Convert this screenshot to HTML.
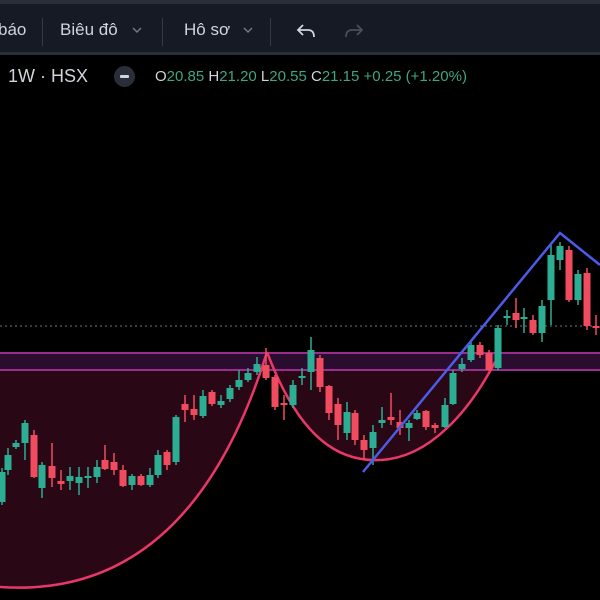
<!DOCTYPE html>
<html><head><meta charset="utf-8"><style>
body{margin:0;width:600px;height:600px;background:#000;overflow:hidden;font-family:"Liberation Sans",sans-serif;position:relative}
.tb{position:absolute;left:0;top:0;width:600px;height:55px;background:#161a24;border-top:4px solid #2a2e39;border-bottom:3px solid #2a2e39;box-sizing:border-box}
.t{position:absolute;top:16px;font-size:17px;color:#d1d4dc}
.ch{position:absolute;top:22px}
.sep{position:absolute;top:14px;width:1px;height:28px;background:#363a45}
.lg{position:absolute;top:66px;font-size:18px;color:#d1d4dc}
.o{position:absolute;top:68px;left:155px;font-size:15px;color:#d1d4dc;white-space:nowrap}
.o span{color:#3fa584}
</style></head><body>
<div class="tb">
<div class="t" style="left:-2px">báo</div>
<div class="sep" style="left:42px"></div>
<div class="t" style="left:60px">Biêu đô</div>
<svg class="ch" style="left:131px" width="12" height="8"><path d="M2 2 L6 6 L10 2" fill="none" stroke="#787b86" stroke-width="1.4"/></svg>
<div class="sep" style="left:162px"></div>
<div class="t" style="left:184px">Hô sơ</div>
<svg class="ch" style="left:242px" width="12" height="8"><path d="M2 2 L6 6 L10 2" fill="none" stroke="#787b86" stroke-width="1.4"/></svg>
<div class="sep" style="left:270px"></div>
<svg style="position:absolute;left:296px;top:18px" width="22" height="18" viewBox="0 0 22 18"><path d="M7 3 L2 8 L7 13 M2 8 H12 Q18 8 18 15" fill="none" stroke="#d1d4dc" stroke-width="1.8"/></svg>
<svg style="position:absolute;left:342px;top:18px" width="22" height="18" viewBox="0 0 22 18"><path d="M15 3 L20 8 L15 13 M20 8 H10 Q4 8 4 15" fill="none" stroke="#4a4e59" stroke-width="1.8"/></svg>
</div>
<div class="lg" style="left:8px">1W · HSX</div>
<div style="position:absolute;left:114px;top:66px;width:21px;height:21px;border-radius:50%;background:#2a2e39"><div style="position:absolute;left:6px;top:9px;width:9px;height:3px;background:#d1d4dc;border-radius:1px"></div></div>
<div class="o">O<span>20.85</span> H<span>21.20</span> L<span>20.55</span> C<span>21.15</span> <span>+0.25 (+1.20%)</span></div>
<svg style="position:absolute;left:0;top:0" width="600" height="600">
<rect x="0" y="353" width="600" height="18" fill="#2a0c2e"/>
<path d="M0 371 L262 371 L267 352 Q190 600 0 587 Z" fill="#2a0714"/>
<path d="M267 352 C300 440 340 462 380 460 C430 458 470 410 495 362 L495 371 L270 371 Z" fill="#2a0714"/>
<line x1="0" y1="353" x2="600" y2="353" stroke="#9a2c8e" stroke-width="2"/>
<line x1="0" y1="370" x2="600" y2="370" stroke="#9a2c8e" stroke-width="2"/>
<line x1="0" y1="326" x2="600" y2="326" stroke="#777" stroke-width="1" stroke-dasharray="2,3"/>
<path d="M0 587 Q190 600 267 352" fill="none" stroke="#e8386a" stroke-width="2.5"/>
<path d="M267 352 C300 440 340 462 380 460 C430 458 470 410 495 362" fill="none" stroke="#e8386a" stroke-width="2.5"/>
<g id="c"></g>
<polyline points="363,472 560,233 600,265" fill="none" stroke="#4a5ce8" stroke-width="2.5"/>
</svg>
<script>
var d=[[2,'g',472,502,468,505],[8,'g',455,470,448,475],[16,'g',443,447,440,449],[25,'g',423,443,420,460],[34,'r',435,477,430,478],[42,'g',465,488,462,498],[52,'r',466,478,443,487],[61,'r',481,484,470,490],[70,'g',476,481,467,490],[79,'g',477,483,467,495],[88,'g',476,478,467,488],[97,'g',467,477,460,483],[105,'r',460,469,445,470],[114,'r',462,470,453,475],[123,'r',470,486,465,487],[132,'g',476,485,474,490],[141,'r',476,485,474,486],[150,'g',475,485,468,487],[158,'g',455,475,450,478],[167,'r',452,465,450,470],[176,'g',417,462,415,465],[185,'r',404,410,395,422],[194,'r',409,415,395,420],[203,'g',396,416,390,418],[212,'r',392,404,390,406],[221,'g',401,405,395,408],[230,'g',388,399,385,402],[239,'g',380,387,370,390],[248,'g',373,380,368,382],[257,'g',364,372,357,375],[266,'r',365,378,348,380],[275,'r',377,407,375,410],[284,'r',403,405,395,420],[293,'g',385,405,380,408],[302,'g',376,378,368,385],[311,'g',350,372,337,390],[320,'r',358,387,355,392],[329,'r',386,413,385,420],[338,'r',404,425,398,440],[347,'g',412,433,402,440],[355,'r',413,440,410,445],[364,'r',440,450,435,460],[373,'g',432,448,425,465],[382,'g',420,423,407,428],[391,'r',417,420,393,425],[400,'r',422,428,410,435],[409,'g',423,428,420,441],[417,'g',413,419,410,420],[426,'r',411,427,410,430],[435,'r',425,428,423,433],[445,'g',405,427,398,428],[453,'g',373,404,370,405],[462,'g',364,369,358,372],[471,'g',345,360,340,362],[480,'r',345,355,342,358],[489,'r',353,370,350,371],[498,'g',328,368,325,370],[507,'g',316,318,310,325],[516,'r',313,320,298,328],[524,'g',317,319,308,333],[533,'r',320,333,315,335],[542,'g',306,333,300,342],[551,'g',255,300,245,325],[560,'g',246,260,242,270],[569,'r',250,300,246,302],[578,'g',274,300,270,305],[587,'r',273,326,268,330],[596,'r',326,328,315,335]];
var s='';d.forEach(function(c){var col=c[1]=='g'?'#2bae94':'#f04b5e';s+='<line x1="'+c[0]+'" x2="'+c[0]+'" y1="'+c[4]+'" y2="'+c[5]+'" stroke="'+col+'" stroke-width="1.5"/><rect x="'+(c[0]-3.5)+'" y="'+c[2]+'" width="7" height="'+Math.max(2,c[3]-c[2])+'" fill="'+col+'"/>';});
document.getElementById('c').innerHTML=s;
</script>
</body></html>
